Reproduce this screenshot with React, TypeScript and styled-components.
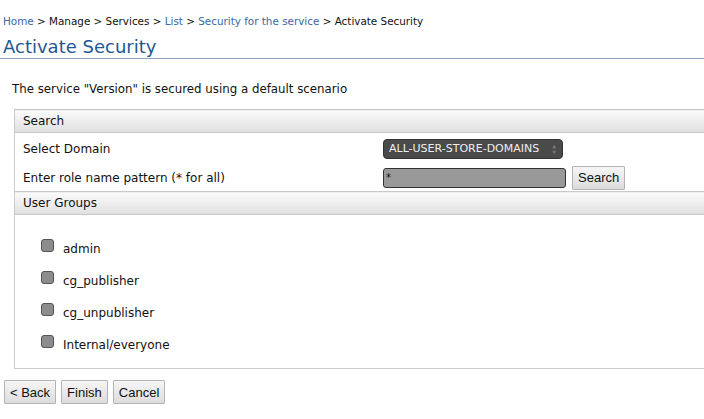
import styled, { createGlobalStyle } from "styled-components";

const Global = createGlobalStyle`
    body {
        margin: 0;
        background: #fff;
        font-family: "DejaVu Sans", Verdana, sans-serif;
        font-size: 12px;
        color: #111;
        overflow: hidden;
    }
`

const Page = styled.div`
    width: 704px;
    overflow: hidden;
    padding-top: 14px;
`

const Crumbs = styled.div`
    padding-left: 3px;
    font-size: 10.4px;
    line-height: 14px;
    color: #111;
    white-space: nowrap;
`

const CrumbLink = styled.a`
    color: #3b66a3;
    text-decoration: none;
`

const Title = styled.h1`
    margin: 0;
    padding: 7px 3px 0;
    font-size: 18px;
    font-weight: normal;
    line-height: 24px;
    color: #1f5794;
    border-bottom: 1px solid #8da4bd;
    height: 23px;
`

const Intro = styled.p`
    margin: 0;
    padding: 23px 0 0 12px;
    font-size: 11.8px;
    line-height: 14px;
`

const Table = styled.table`
    margin: 13px 0 0 14px;
    width: 760px;
    border-collapse: collapse;
    border: 1px solid #ccc;
    font-size: 12px;
`

const Head = styled.th`
    text-align: left;
    font-weight: normal;
    height: 22px;
    padding: 0 0 0 8px;
    background: linear-gradient(#fbfbfb, #dfdfdf);
    border-bottom: 1px solid #c9c9c9;
    border-top: 1px solid #c9c9c9;
`

const Label = styled.td<{ $h: number }>`
    width: 360px;
    padding: 0 0 0 8px;
    height: ${p => p.$h}px;
`

const Cell = styled.td`
    padding: 0;
    vertical-align: middle;
`

const Picker = styled.div`
    display: inline-flex;
    align-items: center;
    justify-content: space-between;
    box-sizing: border-box;
    width: 180px;
    height: 20px;
    padding: 0 6px 0 5px;
    background: #4a4a4a;
    border: 1px solid #333;
    border-radius: 4px;
    color: #eee;
    font-size: 11px;
`

const Arrows = styled.span`
    display: flex;
    flex-direction: column;
    font-size: 5px;
    line-height: 6px;
    color: #777;
`

const InputRow = styled.div`
    display: flex;
    align-items: center;
    gap: 6px;
`

const Field = styled.div`
    box-sizing: border-box;
    width: 183px;
    height: 20px;
    background: #999;
    border: 1px solid #333;
    border-radius: 3px;
    padding-left: 2px;
    font-size: 10px;
    line-height: 17px;
`

const Btn = styled.button`
    font-family: "Liberation Sans", Arial, sans-serif;
    font-size: 13px;
    height: 24px;
    padding: 0 5px;
    color: #111;
    background: linear-gradient(#f6f6f6, #dcdcdc);
    border: 1px solid #b4b4b4;
    border-radius: 1px;
`

const Groups = styled.td`
    padding: 18px 0 7px 26px;
`

const Item = styled.label`
    display: flex;
    align-items: center;
    gap: 9px;
    height: 32px;
`

const Box = styled.span`
    display: inline-block;
    box-sizing: border-box;
    width: 13px;
    height: 13px;
    margin-top: -7px;
    background: #8c8c8c;
    border: 1px solid #555;
    border-radius: 3px;
`

const Footer = styled.div`
    display: flex;
    gap: 5px;
    padding: 11px 0 0 4px;
`

const groups = ["admin", "cg_publisher", "cg_unpublisher", "Internal/everyone"];

export default function App() {
    return (
        <Page>
            <Global />
            <Crumbs>
                <CrumbLink>Home</CrumbLink> &gt; Manage &gt; Services &gt; <CrumbLink>List</CrumbLink> &gt;{" "}
                <CrumbLink>Security for the service</CrumbLink> &gt; Activate Security
            </Crumbs>
            <Title>Activate Security</Title>
            <Intro>The service "Version" is secured using a default scenario</Intro>
            <Table>
                <tbody>
                    <tr><Head colSpan={2}>Search</Head></tr>
                    <tr>
                        <Label $h={31}>Select Domain</Label>
                        <Cell>
                            <Picker>ALL-USER-STORE-DOMAINS<Arrows><span>▲</span><span>▼</span></Arrows></Picker>
                        </Cell>
                    </tr>
                    <tr>
                        <Label $h={27}>Enter role name pattern (* for all)</Label>
                        <Cell>
                            <InputRow>
                                <Field>*</Field>
                                <Btn>Search</Btn>
                            </InputRow>
                        </Cell>
                    </tr>
                    <tr><Head colSpan={2}>User Groups</Head></tr>
                    <tr>
                        <Groups colSpan={2}>
                            {groups.map(g => (
                                <Item key={g}><Box />{g}</Item>
                            ))}
                        </Groups>
                    </tr>
                </tbody>
            </Table>
            <Footer>
                <Btn>&lt; Back</Btn>
                <Btn>Finish</Btn>
                <Btn>Cancel</Btn>
            </Footer>
        </Page>
    );
}
